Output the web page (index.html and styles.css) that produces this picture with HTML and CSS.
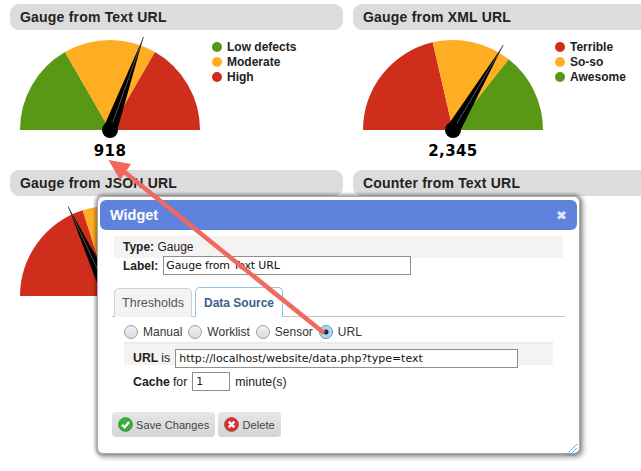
FILE: index.html
```html
<!DOCTYPE html>
<html lang="en">
<head>
<meta charset="utf-8">
<title>Widgets</title>
<link rel="stylesheet" href="styles.css">
</head>
<body>
<main class="board">
  <section class="panel">
    <h2 class="panel-title">Gauge from Text URL</h2>
    <div class="panel-body">
      <div class="gauge">
        <svg class="gauge-svg" width="200" height="110" viewBox="0 0 200 110">
          <path fill="#589814" d="M10 100A90 90 0 0 1 55 22L100 100Z"/>
          <path fill="#ffae23" d="M55 22A90 90 0 0 1 145 22L100 100Z"/>
          <path fill="#cf2e1c" d="M145 22A90 90 0 0 1 190 100L100 100Z"/>
          <path fill="#000" d="M93.400 97.600L133.500 7L106.600 102.400Z"/>
          <path stroke="#555" stroke-width="1" d="M100 100L133.500 7"/>
          <circle cx="100" cy="100" r="8"/>
        </svg>
        <div class="gauge-value">918</div>
      </div>
      <ul class="legend">
        <li class="legend-item"><span class="dot green"></span>Low defects</li>
        <li class="legend-item"><span class="dot orange"></span>Moderate</li>
        <li class="legend-item"><span class="dot red"></span>High</li>
      </ul>
    </div>
  </section>
  <section class="panel">
    <h2 class="panel-title">Gauge from XML URL</h2>
    <div class="panel-body">
      <div class="gauge">
        <svg class="gauge-svg" width="200" height="110" viewBox="0 0 200 110">
          <path fill="#cf2e1c" d="M10 100A90 90 0 0 1 79.700 12.300L100 100Z"/>
          <path fill="#ffae23" d="M79.700 12.300A90 90 0 0 1 155.700 29.300L100 100Z"/>
          <path fill="#589814" d="M155.700 29.300A90 90 0 0 1 190 100L100 100Z"/>
          <path fill="#000" d="M94 96.400L150.300 15L106 103.600Z"/>
          <path stroke="#555" stroke-width="1" d="M100 100L150.300 15"/>
          <circle cx="100" cy="100" r="8"/>
        </svg>
        <div class="gauge-value">2,345</div>
      </div>
      <ul class="legend">
        <li class="legend-item"><span class="dot red"></span>Terrible</li>
        <li class="legend-item"><span class="dot orange"></span>So-so</li>
        <li class="legend-item"><span class="dot green"></span>Awesome</li>
      </ul>
    </div>
  </section>
  <section class="panel">
    <h2 class="panel-title">Gauge from JSON URL</h2>
    <div class="panel-body">
      <div class="gauge">
        <svg class="gauge-svg" width="200" height="110" viewBox="0 0 200 110">
          <path fill="#cf2e1c" d="M10 100A90 90 0 0 1 72.700 14.300L100 100Z"/>
          <path fill="#ffae23" d="M72.700 14.300A90 90 0 0 1 145 22L100 100Z"/>
          <path fill="#000" d="M93 102.500L58 10.300L107 97.500Z"/>
          <path stroke="#555" stroke-width="1" d="M100 100L58 10.300"/>
        </svg>
      </div>
    </div>
  </section>
  <section class="panel">
    <h2 class="panel-title">Counter from Text URL</h2>
  </section>
</main>

<div class="dialog">
  <header class="dialog-head">
    <span class="dialog-title">Widget</span>
    <span class="dialog-close">✖</span>
  </header>
  <div class="dialog-body">
    <div class="meta">
      <div class="meta-row meta-type"><b>Type:</b> Gauge</div>
      <label class="meta-row meta-label"><b>Label:</b> <input class="field field-label" value="Gauge from Text URL"></label>
    </div>
    <div class="tabs">
      <span class="tab">Thresholds</span>
      <span class="tab tab-active">Data Source</span>
    </div>
    <div class="sources">
      <label class="source"><span class="radio"></span>Manual</label>
      <label class="source"><span class="radio"></span>Worklist</label>
      <label class="source"><span class="radio"></span>Sensor</label>
      <label class="source"><span class="radio radio-on"></span>URL</label>
    </div>
    <div class="url-block">
      <label class="url-row"><b>URL</b> is <input class="field field-url" value="http://localhost/website/data.php?type=text"></label>
      <label class="cache-row"><b>Cache</b> for <input class="field field-cache" value="1"> minute(s)</label>
    </div>
    <div class="actions">
      <button class="btn">
        <svg width="15" height="15" viewBox="0 0 16 16"><circle cx="8" cy="8" r="7.300" fill="#38b038" stroke="#2c8f2c"/><path d="M4.300 8.200L7 11L11.800 5.300" fill="none" stroke="#fff" stroke-width="2.400"/></svg>
        Save Changes
      </button>
      <button class="btn">
        <svg width="15" height="15" viewBox="0 0 16 16"><circle cx="8" cy="8" r="7.300" fill="#d8342f" stroke="#b02a2a"/><path d="M5 5L11 11M11 5L5 11" fill="none" stroke="#fff" stroke-width="2.600"/></svg>
        Delete
      </button>
    </div>
    <svg class="resize" width="12" height="12" viewBox="0 0 12 12"><path d="M0 12L12 0M4 12L12 4M8 12L12 8" stroke="#3a97e0" stroke-width="1" stroke-dasharray="2 .6" fill="none"/></svg>
  </div>
</div>

<svg class="arrow" width="641" height="471" viewBox="0 0 641 471">
  <path d="M324 333L122 170" stroke="#ee6a5e" stroke-width="4.500" fill="none"/>
  <path d="M108.500 160L131 164L120 180Z" fill="#f2675c"/>
</svg>
</body>
</html>
```
FILE: styles.css
```css
* { box-sizing: border-box; }
html, body { margin: 0; padding: 0; }
body {
  width: 641px;
  height: 471px;
  overflow: hidden;
  background: #fff;
  font-family: "Liberation Sans", Arial, sans-serif;
  color: #222;
  position: relative;
}
.board {
  display: grid;
  grid-template-columns: 333px 288px;
  grid-auto-rows: 166px;
  column-gap: 10px;
  padding: 4px 0 0 10px;
}
.panel-title {
  margin: 0;
  height: 26px;
  padding-left: 10px;
  background: #dcdcdc;
  border-radius: 9px;
  font-size: 14px;
  line-height: 26px;
  font-weight: bold;
  letter-spacing: 0.2px;
  color: #222;
}
.panel:nth-child(even) .panel-title { border-radius: 9px 0 0 9px; }
.panel-body { display: flex; }
.gauge { width: 200px; }
.gauge-svg { display: block; }
.gauge-value {
  text-align: center;
  font-family: "DejaVu Sans", sans-serif;
  font-weight: bold;
  font-size: 15px;
  line-height: 18px;
  letter-spacing: 0.4px;
  color: #000;
  margin-top: 2px;
}
.legend {
  list-style: none;
  margin: 9px 0 0 2px;
  padding: 0;
  font-size: 12px;
  font-weight: bold;
}
.legend-item {
  display: flex;
  align-items: center;
  height: 15px;
  gap: 5px;
}
.dot { width: 10px; height: 10px; border-radius: 50%; }
.green { background: #589814; }
.orange { background: #ffae23; }
.red { background: #cf2e1c; }

.dialog {
  position: absolute;
  left: 98px;
  top: 197px;
  width: 481px;
  height: 256px;
  padding: 3px 2px 0;
  background: #fff;
  border-radius: 5px;
  box-shadow: 0 0 0 1px #aaa, 0 0 3px 3px rgba(0,0,0,0.25), 2px 2px 5px 3px rgba(0,0,0,0.25);
  font-size: 12px;
  color: #222;
}
.dialog-head {
  display: flex;
  justify-content: space-between;
  align-items: center;
  height: 30px;
  padding: 0 10px;
  background: #5f82dc;
  border-radius: 6px;
  color: #fff;
}
.dialog-title { font-weight: bold; font-size: 14.500px; }
.dialog-close { font-family: "DejaVu Sans", sans-serif; font-size: 13px; color: #dfe8fa; }
.dialog-body { position: relative; height: 223px; }
.meta { margin: 6px 0 0 14px; }
.meta-row { display: block; padding-left: 9px; }
.meta-type {
  width: 449px;
  height: 22px;
  line-height: 22px;
  background: #f5f3f2;
}
.meta-label { display: flex; align-items: center; gap: 5px; height: 19px; margin-top: -2px; }
.field {
  font-family: "DejaVu Sans", sans-serif;
  font-size: 11px;
  color: #111;
  height: 19px;
  padding: 0 3px;
  border: 1px solid #8e8e8e;
  border-radius: 0;
  background: #fff;
  outline: none;
}
.field-label { width: 248px; padding: 0 2px; letter-spacing: -0.15px; }
.tabs {
  display: flex;
  gap: 3px;
  margin: 13px 0 0 12px;
  padding-left: 2px;
  width: 453px;
  height: 29px;
  border-bottom: 1px solid #c4c4c4;
  align-items: flex-end;
}
.tab {
  height: 29px;
  width: 78px;
  line-height: 28px;
  text-align: center;
  font-size: 12.500px;
  border: 1px solid #cfcfcf;
  border-bottom: 0;
  border-radius: 5px 5px 0 0;
  background: #f3f3f3;
  color: #555;
  margin-bottom: -1px;
}
.tab-active {
  height: 30px;
  width: 88px;
  line-height: 30px;
  border-color: #8cc4ee;
  background: #fff;
  color: #3a5f8c;
  font-weight: bold;
  font-size: 12px;
}
.sources {
  display: flex;
  gap: 6px;
  margin: 6px 0 0 24px;
  height: 18px;
  align-items: center;
}
.source { display: flex; align-items: center; gap: 5px; color: #333; }
.radio {
  width: 14px;
  height: 14px;
  border-radius: 50%;
  border: 1px solid #a0a0a0;
  background: linear-gradient(#f0f0f0, #dcdcdc);
}
.radio-on {
  border-color: #5e8fc2;
  background: radial-gradient(circle, #10284a 2px, #a9cdf0 3px, #cfe2f6);
}
.url-block { margin: 1px 0 0 24px; font-size: 12.300px; }
.url-row {
  display: flex;
  align-items: flex-start;
  gap: 3px;
  width: 429px;
  height: 23px;
  padding: 7px 0 0 9px;
  line-height: 19px;
  background: linear-gradient(#ebebeb 2px, #f5f3f2 2px);
}
.field-url { width: 343px; margin-left: 2px; }
.cache-row {
  display: flex;
  align-items: center;
  gap: 3px;
  padding-left: 9px;
  margin-top: 7px;
  height: 19px;
}
.field-cache { width: 38px; margin: 0 2px; color: #222; }
.actions { display: flex; gap: 3px; margin: 21px 0 0 12px; }
.btn {
  display: flex;
  align-items: center;
  gap: 3px;
  height: 25px;
  padding: 0 6px;
  border: 0;
  border-radius: 4px;
  background: linear-gradient(#e6e6e6, #d4d4d4);
  font-family: "Liberation Sans", Arial, sans-serif;
  font-size: 11px;
  letter-spacing: 0.1px;
  color: #444;
}
.resize { position: absolute; right: 0; bottom: 3px; }
.arrow { position: absolute; left: 0; top: 0; pointer-events: none; }
```
